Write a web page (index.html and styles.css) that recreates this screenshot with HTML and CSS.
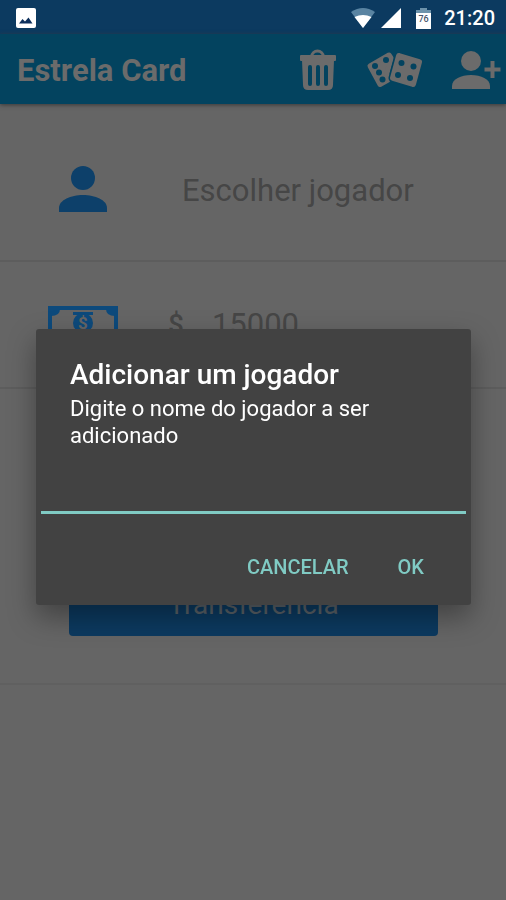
FILE: index.html
```html
<!DOCTYPE html>
<html lang="pt-BR">
<head>
<meta charset="utf-8">
<meta name="viewport" content="width=device-width, initial-scale=1">
<title>Estrela Card</title>
<link rel="stylesheet" href="styles.css">
</head>
<body>
<div class="status">
  <svg class="status-photo" width="20" height="20" viewBox="0 0 20 20" aria-hidden="true"><rect width="20" height="20" rx="2" fill="#fff"/><path d="M3 15.500l3.500-4.500 2.500 2.500 3.500-4 4 6z" fill="#0c2f5c"/></svg>
  <svg width="24" height="20" viewBox="0 0 24 20" aria-hidden="true"><path d="M0 4Q12-4 24 4L12 20z" fill="#5a84a2"/><path d="M3.500 9Q12 5 20.500 9L12 20z" fill="#fff"/></svg>
  <svg class="status-signal" width="20" height="20" viewBox="0 0 20 20" aria-hidden="true"><path d="M20 0v20H0z" fill="#fff"/></svg>
  <svg class="status-battery" width="15" height="21" viewBox="0 0 15 21" aria-hidden="true"><path d="M4 0h7v2h4v4H0V2h4z" fill="#6d93ab"/><path d="M0 5h15v16H0z" fill="#fff"/><text x="7.500" y="14" text-anchor="middle" class="battery-level">76</text></svg>
  <span>21:20</span>
</div>
<header class="bar">
  <h1>Estrela Card</h1>
  <button type="button" aria-label="Apagar">
    <svg width="38" height="42" viewBox="0 0 38 42"><path d="M12.500 8C13 0 24 0 24.500 8" fill="none" stroke="currentColor" stroke-width="3"/><rect x="1" y="6" width="36" height="6" rx="1" fill="currentColor"/><path d="M3 11h32l-1 25q0 5-5 5H9q-5 0-5-5z" fill="currentColor"/><path d="M11 18v17M19 18v17M27 18v17" stroke="#03435f" stroke-width="4" stroke-linecap="round"/></svg>
  </button>
  <button type="button" aria-label="Dados">
    <svg width="56" height="42" viewBox="0 0 56 42"><path d="M4 17L23 6L25 9L21 24L22 31L14 35.500z" fill="currentColor" stroke="currentColor" stroke-width="5" stroke-linejoin="round"/><path d="M33 8L53 14L47 35L27 29z" fill="currentColor" stroke="#03435f" stroke-width="9" stroke-linejoin="round"/><path d="M33 7L53 13L47 35L27 29z" fill="currentColor" stroke="currentColor" stroke-width="6" stroke-linejoin="round"/><g fill="#03435f"><circle cx="9" cy="17" r="3"/><circle cx="20" cy="11" r="3"/><circle cx="13" cy="23.500" r="3"/><circle cx="16.500" cy="30.500" r="3"/><circle cx="35.500" cy="14" r="3"/><circle cx="47.500" cy="17.500" r="3"/><circle cx="32" cy="26" r="3"/><circle cx="44" cy="29" r="3"/></g></svg>
  </button>
  <button type="button" aria-label="Adicionar jogador">
    <svg width="50" height="42" viewBox="0 0 50 42"><circle cx="20" cy="12" r="10" fill="currentColor"/><path d="M1 40v-3C1 30 10 26 20 26s19 4 19 11v3z" fill="currentColor"/><path d="M41.500 12v17M33.500 20.500h16" stroke="currentColor" stroke-width="4"/></svg>
  </button>
</header>
<main>
  <section class="row player">
    <svg width="48" height="48" viewBox="0 0 48 48" aria-hidden="true"><circle cx="24" cy="12" r="12" fill="currentColor"/><path d="M0 46v-4c0-8 12-13 24-13s24 5 24 13v4z" fill="currentColor"/></svg>
    <span>Escolher jogador</span>
  </section>
  <section class="row money">
    <svg width="70" height="38" viewBox="0 0 70 38" aria-hidden="true"><path d="M2 2h66v34H2z" fill="none" stroke="currentColor" stroke-width="4"/><path d="M3 3h9q0 7-9 7zM67 3h-9q0 7 9 7zM3 35h9q0-7-9-7zM67 35h-9q0-7 9-7zM25 6h20v3H25z" fill="currentColor"/><circle cx="35" cy="17" r="10" fill="currentColor"/><text x="35" y="23" text-anchor="middle" class="bill-sign">$</text></svg>
    <strong class="currency">$</strong>
    <span>15000</span>
  </section>
  <section class="transfer">
    <button type="button">Transferência</button>
  </section>
</main>
<div class="overlay">
  <form class="dialog" role="dialog" aria-labelledby="dialog-title">
    <h2 id="dialog-title">Adicionar um jogador</h2>
    <label for="player-name">Digite o nome do jogador a ser adicionado</label>
    <input id="player-name" type="text">
    <div class="actions">
      <button type="button">CANCELAR</button>
      <button type="button">OK</button>
    </div>
  </form>
</div>
</body>
</html>
```
FILE: styles.css
```css
* {
  box-sizing: border-box;
}

body {
  margin: 0;
  min-height: 100vh;
  background: #656565;
  color: #464646;
  font-family: Roboto, sans-serif;
}

button {
  padding: 0;
  border: 0;
  background: none;
  color: inherit;
  font: inherit;
}

svg {
  display: block;
  flex: none;
}

.status {
  display: flex;
  align-items: center;
  height: 34px;
  padding: 2px 11px 0 16px;
  background: #0c3a60;
  color: #fff;
  font-size: 20px;
  font-weight: 500;
}

.status-photo {
  margin-right: auto;
}

.status-signal {
  margin: 0 15px 0 6px;
}

.status-battery {
  margin-right: 13px;
}

.battery-level {
  font-size: 9px;
  fill: #44546a;
}

.bar {
  display: flex;
  align-items: center;
  height: 70px;
  padding: 2px 5px 0 17px;
  background: #03435f;
  color: #6b6b6b;
  box-shadow: 0 1px 4px #383838;
}

.bar h1 {
  margin: 0 auto 0 0;
  font-size: 31px;
  font-weight: 700;
}

.bar button + button {
  margin-left: 29px;
}

.row {
  display: flex;
  align-items: center;
  border-bottom: 2px solid #5d5d5d;
  font-size: 31px;
}

.player {
  height: 158px;
  padding: 16px 59px 0;
  gap: 75px;
}

.player svg {
  color: #0d406a;
}

.money {
  height: 127px;
  padding: 0 48px;
}

.money svg {
  color: #0d4a7c;
}

.bill-sign {
  font-size: 17px;
  font-weight: 700;
  fill: #656565;
}

.currency {
  margin: 0 28px 0 50px;
  font-size: 28px;
  font-weight: 500;
}

.transfer {
  display: flex;
  align-items: flex-end;
  height: 296px;
  padding: 0 68px 47px 69px;
  border-bottom: 2px solid #606060;
}

.transfer button {
  width: 100%;
  height: 64px;
  border-radius: 4px;
  background: #0c3a60;
  color: #5a6268;
  font-size: 28px;
}

.overlay {
  position: fixed;
  inset: 0;
  display: flex;
  align-items: center;
  justify-content: center;
  padding: 34px 35px 0 36px;
}

.dialog {
  display: flex;
  flex-direction: column;
  width: 100%;
  padding: 28px 5px 14px;
  border-radius: 3px;
  background: #424242;
  color: #fff;
  box-shadow: 0 12px 28px rgba(0, 0, 0, 0.35);
}

.dialog h2 {
  margin: 0 29px 2px;
  font-size: 28px;
  font-weight: 500;
  line-height: 36px;
}

.dialog label {
  margin: 0 29px;
  font-size: 22px;
  line-height: 27px;
}

.dialog input {
  height: 65px;
  padding: 16px 29px 8px;
  border: 0;
  border-bottom: 3px solid #80cbc4;
  outline: 0;
  background: none;
  color: inherit;
  font: inherit;
  font-size: 22px;
}

.actions {
  display: flex;
  justify-content: flex-end;
  gap: 15px;
  padding: 29px 25px 0;
  color: #80cbc4;
  font-size: 20px;
  font-weight: 500;
}

.actions button {
  height: 48px;
  padding: 0 17px;
}
```
